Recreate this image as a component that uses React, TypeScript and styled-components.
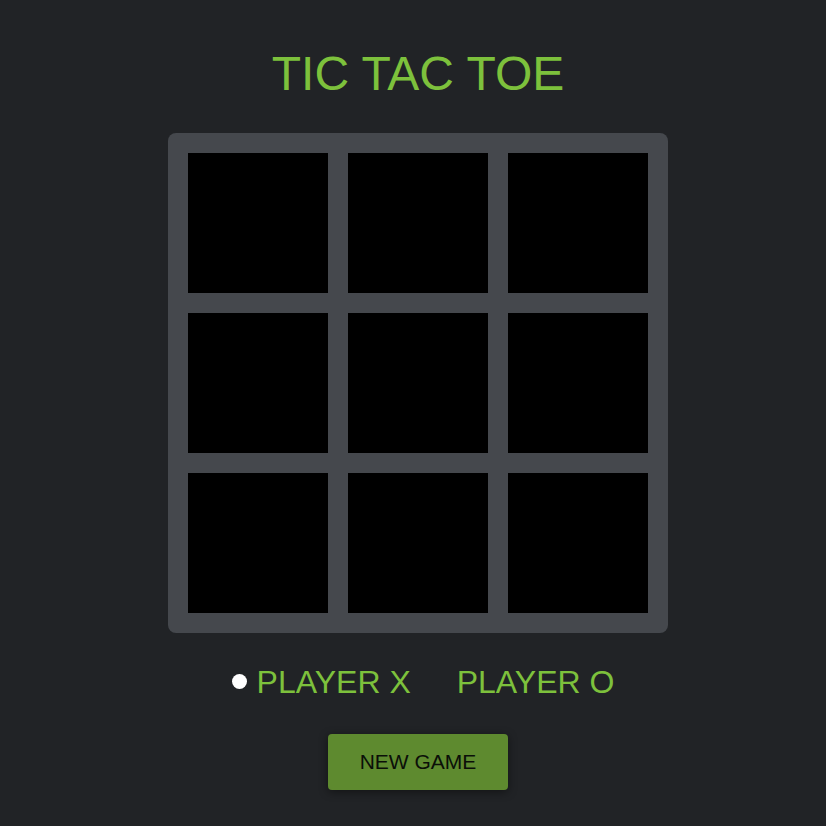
import React, { useState } from "react";
import styled, { createGlobalStyle } from "styled-components";

const Global = createGlobalStyle`
  html, body { margin: 0; padding: 0; background: #212326; }
  body { font-family: "Liberation Sans", Arial, sans-serif; }
`;

const Page = styled.div`
  min-height: 826px;
  display: flex;
  flex-direction: column;
  align-items: center;
  padding: 46px 0 0 10px;
  box-sizing: border-box;
`;

const Title = styled.h1`
  margin: 0;
  font-size: 48px;
  font-weight: 400;
  line-height: 55px;
  color: #7dc13c;
`;

const Board = styled.div`
  margin-top: 32px;
  display: grid;
  grid-template-columns: repeat(3, 140px);
  grid-template-rows: repeat(3, 140px);
  gap: 20px;
  padding: 20px;
  background: #45484d;
  border-radius: 8px;
`;

const Cell = styled.button`
  border: none;
  padding: 0;
  background: #000;
  cursor: pointer;
  color: #7dc13c;
  font-family: inherit;
  font-size: 80px;
`;

const Players = styled.div`
  margin-top: 31px;
  display: flex;
  align-items: center;
  gap: 46px;
  padding-left: 10px;
`;

const Player = styled.div`
  display: flex;
  align-items: center;
  font-size: 32px;
  line-height: 37px;
  color: #7dc13c;
`;

const Dot = styled.span`
  width: 15px;
  height: 15px;
  border-radius: 50%;
  background: #fff;
  margin-right: 10px;
  margin-top: -2px;
`;

const NewGame = styled.button`
  margin-top: 33px;
  width: 180px;
  height: 56px;
  border: none;
  border-radius: 4px;
  background: #5e8a2f;
  color: #0b0f08;
  font-family: inherit;
  font-size: 21px;
  cursor: pointer;
  box-shadow: 0 2px 10px rgba(0, 0, 0, 0.45);
`;

export default function App() {
  const [cells, setCells] = useState<string[]>(Array(9).fill(""));
  const [turn, setTurn] = useState<"X" | "O">("X");
  const play = (i: number) => {
    if (cells[i]) return;
    const next = cells.slice();
    next[i] = turn;
    setCells(next);
    setTurn(turn === "X" ? "O" : "X");
  };
  return (
    <>
      <Global />
      <Page>
        <Title>TIC TAC TOE</Title>
        <Board>
          {cells.map((c, i) => (
            <Cell key={i} onClick={() => play(i)}>
              {c}
            </Cell>
          ))}
        </Board>
        <Players>
          <Player>
            {turn === "X" && <Dot />}PLAYER X
          </Player>
          <Player>
            {turn === "O" && <Dot />}PLAYER O
          </Player>
        </Players>
        <NewGame
          onClick={() => {
            setCells(Array(9).fill(""));
            setTurn("X");
          }}
        >
          NEW GAME
        </NewGame>
      </Page>
    </>
  );
}
